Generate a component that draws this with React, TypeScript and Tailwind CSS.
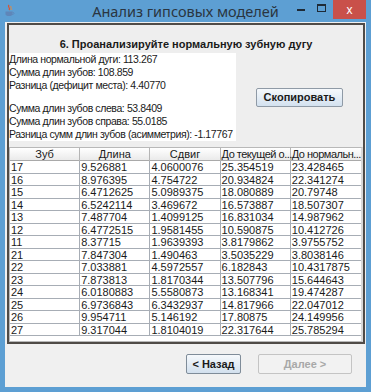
const rows: string[][] = [
  ["17", "9.526881", "4.0600076", "25.354519", "23.428465"],
  ["16", "8.976395", "4.754722", "20.934824", "22.341274"],
  ["15", "6.4712625", "5.0989375", "18.080889", "20.79748"],
  ["14", "6.5242114", "3.469672", "16.573887", "18.507307"],
  ["13", "7.487704", "1.4099125", "16.831034", "14.987962"],
  ["12", "6.4772515", "1.9581455", "10.590875", "10.412726"],
  ["11", "8.37715", "1.9639393", "3.8179862", "3.9755752"],
  ["21", "7.847304", "1.490463", "3.5035229", "3.8038146"],
  ["22", "7.033881", "4.5972557", "6.182843", "10.4317875"],
  ["23", "7.873813", "1.8170344", "13.507796", "15.644643"],
  ["24", "6.0180883", "5.5580873", "13.168341", "19.474287"],
  ["25", "6.9736843", "6.3432937", "14.817966", "22.047012"],
  ["26", "9.954711", "5.146192", "17.80875", "24.149956"],
  ["27", "9.317044", "1.8104019", "22.317644", "25.785294"],
];

const headers = ["Зуб", "Длина", "Сдвиг", "До текущей о...", "До нормальн..."];

const JavaIcon = () => (
  <svg width="11" height="13" viewBox="0 0 11 13">
    <path d="M5 1 C3 3 7 4 5 6" stroke="#e0502a" strokeWidth="1.2" fill="none" />
    <path d="M7 2 C6 3.5 8 4 7 6" stroke="#e88a3a" strokeWidth="1" fill="none" />
    <path d="M1.5 7.5 H8.5 V10 C8.5 11.5 7 12 5 12 C3 12 1.5 11.5 1.5 10 Z" fill="#5f86b8" />
    <path d="M8.5 8.2 C10.5 8.2 10.5 10.5 8.3 10.5" stroke="#5f86b8" strokeWidth="0.9" fill="none" />
  </svg>
);

export default function App() {
  return (
    <div className="w-[371px] h-[392px] bg-[#5d9fd3] flex flex-col font-['Liberation_Sans',Arial,sans-serif] text-[#1a1a1a] overflow-hidden">
      {/* title bar */}
      <div className="h-[22px] grid grid-cols-[1fr_auto_1fr] items-start">
        <div className="pl-[4px] pt-[4px]">
          <JavaIcon />
        </div>
        <div className="pt-[1px] text-[14.5px] leading-[20px] text-[#2a3540] font-['Noto_Sans',sans-serif]">
          Анализ гипсовых моделей
        </div>
        <div className="flex justify-end items-start pr-[5px]">
          <div className="w-[8px] h-[2px] bg-[#1e2a36] mt-[9px] mr-[12px]" />
          <div className="w-[9px] h-[8px] border border-[#1e2a36] border-t-2 mt-[4px] mr-[7px]" />
          <div className="w-[33px] h-[19px] bg-[#c9504a] flex items-center justify-center text-white text-[12px] leading-none">
            x
          </div>
        </div>
      </div>

      {/* client area */}
      <div className="mx-[5px] mb-[5px] flex-1 bg-[#f0f0f0] flex flex-col">
        <div className="mt-[1px] ml-[2px] mr-[1px] h-[321px] border-2 border-[#4f4b47] bg-[#eeeeee] flex flex-col">
          <div className="h-[28px] pt-[13px] text-center font-bold text-[11px] leading-[13px]">
            6. Проанализируйте нормальную зубную дугу
          </div>
          <div className="flex h-[88px]">
            <div className="w-[227px] bg-white text-[10.5px] leading-[13px] tracking-[-0.4px] flex flex-col">
              <div>Длина нормальной дуги: 113.267</div>
              <div>Сумма длин зубов: 108.859</div>
              <div>Разница (дефицит места): 4.40770</div>
              <div className="h-[13px]" />
              <div>Сумма длин зубов слева: 53.8409</div>
              <div>Сумма длин зубов справа: 55.0185</div>
              <div className="whitespace-nowrap">Разница сумм длин зубов (асимметрия): -1.17767</div>
            </div>
            <div className="flex-1 flex items-center justify-center">
              <button className="w-[87px] h-[19px] rounded-[2px] border border-[#8f9aa6] bg-gradient-to-b from-[#f6f9fc] to-[#d3e1ef] text-[11px] font-bold leading-none text-[#1a1a1a]">
                Скопировать
              </button>
            </div>
          </div>
          <div className="mt-[6px] flex-1 border border-[#b8b8b8] border-r-2 border-r-[#d8d8d8] bg-white flex flex-col">
            <div className="grid grid-cols-5 h-[13px] bg-gradient-to-b from-[#ffffff] to-[#eaeaea] border-b border-[#a9a9a9]">
              {headers.map((h, i) => (
                <div
                  key={h}
                  className={`text-[11px] leading-[13px] whitespace-nowrap ${i < 3 ? "text-center" : "pl-[1px] text-[10.5px] tracking-[-0.5px]"} ${i < 4 ? "border-r border-[#b5b5b5]" : ""}`}
                >
                  {h}
                </div>
              ))}
            </div>
            {rows.map((r) => (
              <div key={r[0]} className="grid grid-cols-5 h-[12.5px] border-b border-[#a7adb5]">
                {r.map((c, i) => (
                  <div
                    key={i}
                    className={`text-[11px] leading-[12px] pl-[1px] whitespace-nowrap overflow-hidden ${i < 4 ? "border-r border-[#a7adb5]" : ""}`}
                  >
                    {c}
                  </div>
                ))}
              </div>
            ))}
          </div>
        </div>

        {/* wizard buttons */}
        <div className="flex items-start pt-[10px]">
          <button className="ml-[181px] w-[55px] h-[20px] rounded-[2px] border border-[#7f8c99] bg-gradient-to-b from-[#f6f9fc] to-[#d2e0ee] text-[11px] font-bold leading-none">
            &lt; Назад
          </button>
          <button className="ml-[17px] w-[94px] h-[20px] rounded-[2px] border border-[#c4c4c4] bg-[#f2f2f2] text-[11px] font-bold leading-none text-[#a8a8a8]">
            Далее &gt;
          </button>
        </div>
      </div>
    </div>
  );
}
